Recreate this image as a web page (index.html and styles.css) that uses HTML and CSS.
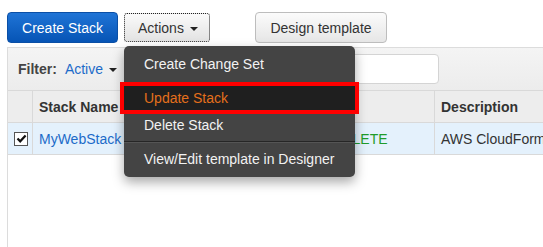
FILE: index.html
```html
<!DOCTYPE html>
<html lang="en">
<head>
  <meta charset="UTF-8" />
  <title>CloudFormation Stacks</title>
  <link rel="stylesheet" href="styles.css">
</head>
<body>

  <div class="toolbar">
    <button class="btn btn-primary">Create Stack</button>
    <div class="actions">
      <button class="btn btn-actions">Actions <span class="caret"></span></button>
      <ul class="menu">
        <li class="menu-item">Create Change Set</li>
        <li class="menu-item active">Update Stack</li>
        <li class="menu-item delete">Delete Stack</li>
        <li class="menu-sep"></li>
        <li class="menu-item">View/Edit template in Designer</li>
      </ul>
    </div>
    <button class="btn btn-default">Design template</button>
  </div>

  <div class="panel">
    <div class="filter-bar">
      <span class="filter-label">Filter:</span>
      <span class="filter-value">Active <span class="caret"></span></span>
      <input class="search" type="text">
    </div>
    <table class="stacks">
      <tr class="head">
        <th class="col-check"></th>
        <th class="col-name">Stack Name</th>
        <th class="col-status">Status</th>
        <th class="col-desc">Description</th>
      </tr>
      <tr class="selected">
        <td class="col-check">
          <span class="check">
            <svg width="11" height="11" viewBox="0 0 11 11"><path d="M1.5 5.5 L4.2 8.3 L9.6 2.4" fill="none" stroke="#111" stroke-width="2.2"/></svg>
          </span>
        </td>
        <td class="link">MyWebStack</td>
        <td class="status">CREATE_COMPLETE</td>
        <td>AWS CloudForm</td>
      </tr>
    </table>
  </div>

</body>
</html>
```

FILE: styles.css
```css
html, body {
  margin: 0;
  height: 100%;
  overflow: hidden;
}

body {
  font-family: "Liberation Sans", Arial, sans-serif;
  font-size: 14px;
  color: #333;
  background: #fff;
}

.toolbar {
  display: flex;
  align-items: flex-start;
  padding: 12px 0 0 7px;
  height: 31px;
}

.btn {
  font-family: inherit;
  font-size: 14px;
  height: 31px;
  padding: 0;
  white-space: nowrap;
  border-radius: 4px;
  cursor: pointer;
}

.btn-primary {
  width: 111px;
  color: #fff;
  border: 1px solid #0a4fa6;
  background: linear-gradient(to bottom, #1f74d6, #0654b5);
}

.actions {
  position: relative;
  margin-left: 6px;
}

.btn-actions {
  width: 86px;
  height: 29px;
  margin-top: 1px;
  padding-left: 13px;
  color: #333;
  text-align: left;
  border: 1px dotted #222;
  border-radius: 3px;
  background: linear-gradient(to bottom, #fafafa, #e3e3e3);
}

.caret {
  display: inline-block;
  width: 0;
  height: 0;
  margin-left: 2px;
  vertical-align: middle;
  border-left: 4px solid transparent;
  border-right: 4px solid transparent;
  border-top: 4px solid #222;
}

.btn-default {
  margin-left: 45px;
  width: 132px;
  color: #333;
  border: 1px solid #bdbdbd;
  background: linear-gradient(to bottom, #fbfbfb, #e6e6e6);
}

.menu {
  position: absolute;
  top: 34px;
  left: 0;
  z-index: 10;
  width: 231px;
  margin: 0;
  padding: 4px 0;
  list-style: none;
  background: #444;
  border-radius: 5px;
  box-shadow: 0 5px 12px rgba(0, 0, 0, 0.35);
}

.menu-item {
  height: 28px;
  line-height: 29px;
  padding: 0 20px;
  color: #f2f2f2;
  white-space: nowrap;
}

.menu-item.active {
  height: 24px;
  line-height: 24px;
  margin: 4px -4px 0;
  color: #e5701c;
  background: #1f1f1f;
  border: 4px solid #f00;
}

.menu-item.delete {
  height: 24px;
  line-height: 22px;
}

.menu-sep {
  height: 1px;
  margin: 3px 0 2px;
  background: #262626;
  border-bottom: 1px solid #555;
}

.panel {
  margin: 4px 0 0 7px;
  height: 200px;
  border-left: 1px solid #dcdcdc;
}

.filter-bar {
  display: flex;
  align-items: center;
  height: 42px;
  padding-left: 10px;
  border-top: 1px solid #dcdcdc;
  background: linear-gradient(to bottom, #f4f4f4, #ececec);
}

.filter-label {
  font-weight: bold;
  color: #444;
}

.filter-value {
  margin-left: 8px;
  color: #1c6bc9;
}

.search {
  margin-left: 153px;
  width: 167px;
  height: 28px;
  padding: 0;
  border: 1px solid #d4d4d4;
  border-radius: 4px;
  background: #fff;
}

.stacks {
  width: 620px;
  border-collapse: collapse;
  table-layout: fixed;
}

.stacks th,
.stacks td {
  height: 31px;
  padding: 0 6px;
  text-align: left;
  white-space: nowrap;
  overflow: hidden;
  border: 1px solid #d9d9d9;
  border-left: 0;
}

.stacks th {
  font-weight: bold;
  color: #333;
  background: #ededed;
}

.col-check { width: 12px; }
.col-name { width: 195px; }
.col-status { width: 181px; }
.col-desc { width: 200px; }

.selected td {
  background: #e4f1fc;
}

.check {
  display: flex;
  align-items: center;
  justify-content: center;
  width: 12px;
  height: 12px;
  border: 1px solid #555;
  background: #fff;
}

.link {
  color: #1c6bc9;
}

.status {
  color: #1f9c2a;
}
```
